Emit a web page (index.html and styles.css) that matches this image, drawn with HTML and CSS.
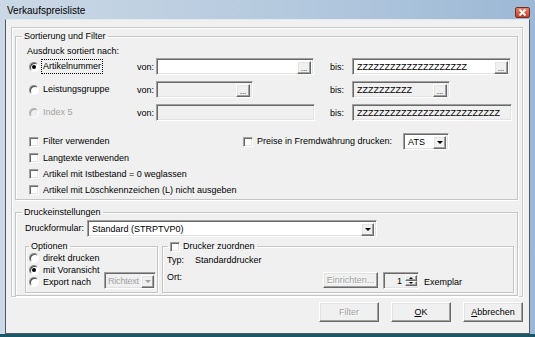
FILE: index.html
```html
<!DOCTYPE html>
<html lang="de">
<head>
  <meta charset="UTF-8" />
  <title>Verkaufspreisliste</title>
  <link rel="stylesheet" href="styles.css">
</head>
<body>
<div class="window">
  <div class="titlebar">
    <span class="title">Verkaufspreisliste</span>
    <span class="close">
      <svg width="9" height="7" viewBox="0 0 9 7"><path d="M1.5 0.5 L7.5 6.5 M7.5 0.5 L1.5 6.5" stroke="#fff" stroke-width="1.8" fill="none"/></svg>
    </span>
  </div>

  <div class="client">
    <div class="panel">
      <fieldset class="group">
        <legend>Sortierung und Filter</legend>
        <div class="sort-body">
          <div class="caption">Ausdruck sortiert nach:</div>

          <div class="range">
            <label class="opt"><span class="radio on"></span><span class="focus">Artikelnummer</span></label>
            <span>von:</span>
            <div class="edit white w158"><span class="val"></span><span class="dots">...</span></div>
            <span>bis:</span>
            <div class="edit white w159"><span class="val">ZZZZZZZZZZZZZZZZZZZZ</span><span class="dots">...</span></div>

            <label class="opt"><span class="radio"></span>Leistungsgruppe</label>
            <span>von:</span>
            <div class="edit w97"><span class="val"></span><span class="dots">...</span></div>
            <span>bis:</span>
            <div class="edit w98"><span class="val">ZZZZZZZZZZ</span><span class="dots">...</span></div>

            <label class="opt off"><span class="radio"></span>Index 5</label>
            <span>von:</span>
            <div class="edit w159"><span class="val"></span></div>
            <span>bis:</span>
            <div class="edit w160"><span class="val">ZZZZZZZZZZZZZZZZZZZZZZZZZZ</span></div>
          </div>

          <div class="checks">
            <label class="opt"><span class="check"></span>Filter verwenden</label>
            <label class="opt preise"><span class="check"></span>Preise in Fremdwährung drucken:
              <span class="combo white w46"><span class="val">ATS</span><span class="arrow"></span></span>
            </label>
            <label class="opt"><span class="check"></span>Langtexte verwenden</label>
            <label class="opt"><span class="check"></span>Artikel mit Istbestand = 0 weglassen</label>
            <label class="opt"><span class="check"></span>Artikel mit Löschkennzeichen (L) nicht ausgeben</label>
          </div>
        </div>
      </fieldset>

      <fieldset class="group print">
        <legend>Druckeinstellungen</legend>
        <div class="print-body">
          <div class="form-row">
            <span class="form-lbl">Druckformular:</span>
            <span class="combo white w290"><span class="val">Standard (STRPTVP0)</span><span class="arrow"></span></span>
          </div>

          <div class="sub-row">
            <fieldset class="group options">
              <legend>Optionen</legend>
              <div class="options-body">
                <label class="opt"><span class="radio"></span>direkt drucken</label>
                <label class="opt"><span class="radio on"></span>mit Voransicht</label>
                <label class="opt"><span class="radio"></span>Export nach</label>
                <span class="combo off w52 export"><span class="val">Richtext</span><span class="arrow"></span></span>
              </div>
            </fieldset>

            <fieldset class="group printer">
              <legend><span class="check"></span>Drucker zuordnen</legend>
              <div class="printer-body">
                <div class="info-row"><span class="info-lbl">Typ:</span>Standarddrucker</div>
                <div class="ort-row">
                  <span class="ort-lbl">Ort:</span>
                  <button class="btn small" disabled>Einrichten...</button>
                  <span class="spin"><span class="val">1</span><span class="spin-btns"><span class="up"></span><span class="down"></span></span></span>
                  <span class="copies">Exemplar</span>
                </div>
              </div>
            </fieldset>
          </div>
        </div>
      </fieldset>
    </div>

    <div class="buttons">
      <button class="btn" disabled>Filter</button>
      <button class="btn"><u>O</u>K</button>
      <button class="btn"><u>A</u>bbrechen</button>
    </div>
  </div>
</div>
</body>
</html>
```

FILE: styles.css
```css
* { box-sizing: border-box; }
body { margin: 0; font-family: "Liberation Sans", Arial, sans-serif; font-size: 9px; color: #000; }

/* window frame */
.window { width: 535px; height: 337px; display: flex; flex-direction: column; background: linear-gradient(to right, #cbd8e5, #b4c9de 55%, #9cb8d5); border-bottom: 3px solid #1b5566; }
.titlebar { height: 19px; flex: none; display: flex; padding: 0 5px 0 7px; }
.title { flex: 1; font-size: 10px; line-height: 12px; padding-top: 5px; }
.close { width: 15px; height: 11px; margin-top: 7px; display: flex; align-items: center; justify-content: center; background: linear-gradient(#e0836a, #c4442a); border: 1px solid #7b2b1d; border-radius: 2px; }
.client { flex: 1; margin: 0 5px; background: #f0f0f0; border: 1px solid #4f5a66; border-top-color: #e2e9f0; padding: 7px 6px 0 5px; }

/* etched boxes */
.panel { border: 1px solid #c9c9c9; box-shadow: 1px 1px 0 #fff, inset 1px 1px 0 #fff; padding: 3px 4px 0 3px; }
.group { margin: 0; padding: 0; min-width: 0; border: 1px solid #c5c5c5; box-shadow: 1px 1px 0 #fff, inset 1px 1px 0 #fff; }
.group legend { padding: 0 2px; margin-left: 6px; line-height: 11px; }
.print { margin-top: 7px; }

/* sort group */
.sort-body { padding: 4px 0 1px 13px; }
.caption { line-height: 11px; margin-left: -2px; }
.range { margin-top: 1px; display: grid; grid-template-columns: 108px 19px 174px 22px auto; grid-auto-rows: 17px; row-gap: 6px; align-items: center; }
.checks { margin-top: 12px; display: grid; grid-template-columns: 214px auto; grid-template-rows: 17px 16px 16px 16px; align-items: center; }
.checks > .opt { grid-column: 1; }
.checks > .preise { grid-column: 2; grid-row: 1; }

.opt { display: flex; align-items: center; gap: 4px; line-height: 11px; white-space: nowrap; }
.opt.off { color: #a3a3a3; }
.focus { outline: 1px dotted #000; padding: 1px 1px; margin-left: -1px; }

.radio { width: 10px; height: 10px; flex: none; border-radius: 50%; background: #fff; border: 1px solid; border-color: #8a8a8a #fff #fff #8a8a8a; box-shadow: inset 1px 1px 0 #444; }
.radio.on::after { content: ""; display: block; width: 4px; height: 4px; margin: 2px; border-radius: 50%; background: #000; }
.off .radio { background: #f0f0f0; border-color: #b5b5b5 #fff #fff #b5b5b5; box-shadow: inset 1px 1px 0 #a8a8a8; }
.check { width: 10px; height: 10px; flex: none; background: #fff; border: 1px solid; border-color: #a0a0a0 #fff #fff #a0a0a0; box-shadow: inset 1px 1px 0 #696969, inset -1px -1px 0 #e3e3e3; }

/* edits and combos */
.edit, .combo, .spin { display: flex; height: 17px; padding: 2px; background: #f0f0f0; border: 1px solid; border-color: #a0a0a0 #fff #fff #a0a0a0; box-shadow: inset 1px 1px 0 #696969, inset -1px -1px 0 #e3e3e3; }
.white { background: #fff; }
.val { flex: 1; padding-left: 2px; line-height: 13px; overflow: hidden; white-space: nowrap; }
.w46 { width: 46px; } .w52 { width: 52px; } .w97 { width: 97px; } .w98 { width: 98px; }
.w158 { width: 158px; } .w159 { width: 159px; } .w160 { width: 160px; } .w290 { width: 290px; }

.dots, .arrow, .spin-btns span, .btn { background: #f0f0f0; border: 1px solid; border-color: #fff #696969 #696969 #fff; box-shadow: inset -1px -1px 0 #a0a0a0, inset 1px 1px 0 #e3e3e3; }
.dots { width: 14px; height: 13px; font-size: 8px; line-height: 13px; text-align: center; }
.arrow { width: 13px; height: 13px; flex: none; display: flex; align-items: center; justify-content: center; }
.arrow::after { content: ""; border-left: 3px solid transparent; border-right: 3px solid transparent; border-top: 3px solid #000; }
.combo.off { color: #a3a3a3; }
.combo.off .arrow::after { border-top-color: #a0a0a0; }
.preise .combo { margin-left: 7px; }

/* print group */
.print-body { padding: 2px 0 2px 9px; }
.form-row { display: flex; align-items: center; }
.form-lbl { width: 62px; line-height: 11px; }
.sub-row { display: flex; gap: 4px; margin-top: 4px; }
.options { width: 133px; }
.options legend { margin-left: 3px; }
.options-body { display: grid; grid-template-columns: 75px 52px; grid-template-rows: repeat(3, 12px); padding: 0 0 4px 3px; align-items: center; }
.options-body .opt { grid-column: 1; }
.export { grid-column: 2; grid-row: 2 / 4; align-self: end; margin-bottom: -1px; padding-right: 1px; }
.export .val { padding-left: 1px; letter-spacing: -0.2px; overflow: visible; }

.printer { width: 352px; }
.printer legend { margin-left: 5px; display: flex; align-items: center; gap: 3px; }
.printer-body { padding: 3px 0 3px 4px; }
.info-row { display: flex; line-height: 11px; }
.info-lbl { width: 28px; }
.ort-row { display: flex; align-items: flex-start; margin-top: 6px; }
.ort-lbl { width: 156px; line-height: 11px; }
.spin { width: 36px; margin-left: 5px; padding-right: 1px; }
.spin .val { text-align: right; padding-right: 3px; }
.spin-btns { display: flex; flex-direction: column; width: 12px; }
.spin-btns span { height: 6.5px; display: flex; align-items: center; justify-content: center; }
.spin-btns .up::after { content: ""; border-left: 2px solid transparent; border-right: 2px solid transparent; border-bottom: 2px solid #000; }
.spin-btns .down::after { content: ""; border-left: 2px solid transparent; border-right: 2px solid transparent; border-top: 2px solid #000; }
.copies { margin-left: 5px; margin-top: 5px; line-height: 11px; }

/* buttons */
.btn { font: inherit; color: #000; width: 60px; height: 20px; padding: 0; }
.btn:disabled { color: #a0a0a0; text-shadow: 1px 1px 0 #fff; }
.btn.small { width: 55px; height: 16px; }
.buttons { display: flex; justify-content: flex-end; gap: 12px; margin-top: 5px; }
```
